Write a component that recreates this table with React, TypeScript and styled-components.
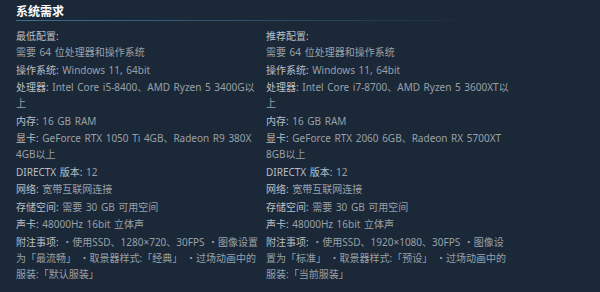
import styled, { createGlobalStyle } from 'styled-components';

const GlobalStyle = createGlobalStyle`
    html, body {
        margin: 0;
        padding: 0;
        background: #1b2838;
    }
    body {
        font-family: "Noto Sans", "Noto Sans CJK SC", sans-serif;
    }
`;

const Page = styled.div`
    width: 600px;
    height: 292px;
    box-sizing: border-box;
    padding: 0 16px;
    background: #1b2838;
    overflow: hidden;
`;

const Title = styled.h2`
    margin: 0;
    padding: 4px 0 1px;
    font-size: 12px;
    line-height: 16px;
    font-weight: 600;
    color: #ffffff;
    background: linear-gradient(to right, #3d6f8e 0%, rgba(61, 111, 142, 0.4) 55%, rgba(61, 111, 142, 0) 82%) no-repeat left bottom / 100% 1px;
`;

const Columns = styled.div`
    display: grid;
    grid-template-columns: 245px 245px;
    column-gap: 5px;
    margin-top: 7px;
`;

const Col = styled.div`
    font-size: 10px;
    line-height: 16px;
    word-spacing: 1px;
    color: #99a0a7;
`;

const Heading = styled.div`
    color: #b9bfc5;
`;

const List = styled.ul`
    list-style: none;
    margin: 0;
    padding: 0;
`;

const Item = styled.li`
    margin-bottom: 1.5px;
`;

const Label = styled.span`
    color: #b9bfc5;
`;

interface IReq {
    label?: string;
    value: string;
}

interface IColumn {
    heading: string;
    items: IReq[];
}

const columns: IColumn[] = [
    {
        heading: '最低配置:',
        items: [
            { value: '需要 64 位处理器和操作系统' },
            { label: '操作系统:', value: 'Windows 11, 64bit' },
            { label: '处理器:', value: 'Intel Core i5-8400、AMD Ryzen 5 3400G以上' },
            { label: '内存:', value: '16 GB RAM' },
            { label: '显卡:', value: 'GeForce RTX 1050 Ti 4GB、Radeon R9 380X 4GB以上' },
            { label: 'DIRECTX 版本:', value: '12' },
            { label: '网络:', value: '宽带互联网连接' },
            { label: '存储空间:', value: '需要 30 GB 可用空间' },
            { label: '声卡:', value: '48000Hz 16bit 立体声' },
            { label: '附注事项:', value: '・使用SSD、1280×720、30FPS ・图像设置为「最流畅」 ・取景器样式:「经典」 ・过场动画中的服装:「默认服装」' },
        ],
    },
    {
        heading: '推荐配置:',
        items: [
            { value: '需要 64 位处理器和操作系统' },
            { label: '操作系统:', value: 'Windows 11, 64bit' },
            { label: '处理器:', value: 'Intel Core i7-8700、AMD Ryzen 5 3600XT以上' },
            { label: '内存:', value: '16 GB RAM' },
            { label: '显卡:', value: 'GeForce RTX 2060 6GB、Radeon RX 5700XT 8GB以上' },
            { label: 'DIRECTX 版本:', value: '12' },
            { label: '网络:', value: '宽带互联网连接' },
            { label: '存储空间:', value: '需要 30 GB 可用空间' },
            { label: '声卡:', value: '48000Hz 16bit 立体声' },
            { label: '附注事项:', value: '・使用SSD、1920×1080、30FPS ・图像设置为「标准」 ・取景器样式:「预设」 ・过场动画中的服装:「当前服装」' },
        ],
    },
];

function App() {
    return (
        <Page>
            <GlobalStyle />
            <Title>系统需求</Title>
            <Columns>
                {columns.map(col => (
                    <Col key={col.heading}>
                        <Heading>{col.heading}</Heading>
                        <List>
                            {col.items.map((req, i) => (
                                <Item key={i}>
                                    {req.label ? <><Label>{req.label}</Label> {req.value}</> : req.value}
                                </Item>
                            ))}
                        </List>
                    </Col>
                ))}
            </Columns>
        </Page>
    );
}

export default App;
